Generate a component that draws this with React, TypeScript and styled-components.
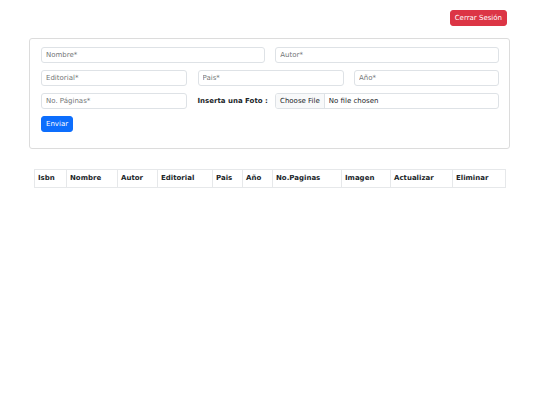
import styled, { createGlobalStyle } from 'styled-components';

const GlobalStyle = createGlobalStyle`
  * { box-sizing: border-box; }
  body {
    margin: 0;
    background: #fff;
    font-family: "DejaVu Sans", "Liberation Sans", sans-serif;
    color: #212529;
  }
`;

const columns = [
  { label: 'Isbn', width: 32 },
  { label: 'Nombre', width: 51 },
  { label: 'Autor', width: 40 },
  { label: 'Editorial', width: 55 },
  { label: 'Pais', width: 30 },
  { label: 'Año', width: 30 },
  { label: 'No.Paginas', width: 69 },
  { label: 'Imagen', width: 49 },
  { label: 'Actualizar', width: 62 },
  { label: 'Eliminar', width: 53 },
];

export default function App() {
  return (
    <>
      <GlobalStyle />
      <Page>
        <TopBar>
          <Button $variant="danger">Cerrar Sesión</Button>
        </TopBar>

        <Card>
          <Form onSubmit={e => e.preventDefault()}>
            <Row $cols="1fr 1fr">
              <Input placeholder="Nombre*" />
              <Input placeholder="Autor*" />
            </Row>
            <Row $cols="146px 146px 1fr">
              <Input placeholder="Editorial*" />
              <Input placeholder="Pais*" />
              <Input placeholder="Año*" />
            </Row>
            <Row $cols="146px 67px 1fr">
              <Input placeholder="No. Páginas*" />
              <Label>Inserta una Foto :</Label>
              <FileInput type="file" />
            </Row>
            <Actions>
              <Button $variant="primary" type="submit">Enviar</Button>
            </Actions>
          </Form>
        </Card>

        <Table>
          <colgroup>
            {columns.map(c => (
              <col key={c.label} style={{ width: c.width }} />
            ))}
          </colgroup>
          <thead>
            <tr>
              {columns.map(c => (
                <Th key={c.label}>{c.label}</Th>
              ))}
            </tr>
          </thead>
          <tbody></tbody>
        </Table>
      </Page>
    </>
  );
}

const Page = styled.div`
  padding: 10px 30px 0 29px;
`;

const TopBar = styled.div`
  display: flex;
  justify-content: flex-end;
  padding-right: 3px;
`;

const Button = styled.button<{ $variant: 'primary' | 'danger' }>`
  display: block;
  font-family: inherit;
  font-size: 7px;
  line-height: 1.5;
  height: 16px;
  padding: 0 4px;
  border: 1px solid ${p => (p.$variant === 'primary' ? '#0d6efd' : '#dc3545')};
  background: ${p => (p.$variant === 'primary' ? '#0d6efd' : '#dc3545')};
  color: #fff;
  border-radius: 3px;
  cursor: pointer;
`;

const Card = styled.div`
  margin-top: 12px;
  border: 1px solid #dcdcdc;
  border-radius: 3px;
  padding: 8px 10px 16px 11px;
`;

const Form = styled.form`
  display: flex;
  flex-direction: column;
  gap: 7px;
`;

const Row = styled.div<{ $cols: string }>`
  display: grid;
  grid-template-columns: ${p => p.$cols};
  column-gap: 10.5px;
  align-items: center;
  line-height: 1;
`;

const Actions = styled.div`
  display: flex;
  line-height: 1;
`;

const Input = styled.input`
  display: block;
  font-family: inherit;
  font-size: 7px;
  height: 16px;
  width: 100%;
  padding: 0 4px;
  border: 1px solid #dee2e6;
  border-radius: 3px;
  color: #212529;
  outline: none;

  &::placeholder {
    color: #737678;
  }
`;

const Label = styled.label`
  font-size: 7px;
  font-weight: bold;
  color: #212529;
  white-space: nowrap;
`;

const FileInput = styled.input`
  display: block;
  font-family: inherit;
  font-size: 7px;
  height: 16px;
  width: 100%;
  padding: 0;
  border: 1px solid #dee2e6;
  border-radius: 3px;
  color: #212529;
  overflow: hidden;

  &::file-selector-button {
    font-family: inherit;
    font-size: 7px;
    height: 100%;
    margin: 0 4px 0 0;
    padding: 0 4px;
    border: none;
    border-right: 1px solid #dee2e6;
    background: #f8f9fa;
    color: #212529;
  }
`;

const Table = styled.table`
  margin: 20px 0 0 5px;
  width: 471px;
  table-layout: fixed;
  border-collapse: collapse;
`;

const Th = styled.th`
  text-align: left;
  font-size: 7px;
  font-weight: bold;
  line-height: 1.5;
  height: 18px;
  padding: 0 3px;
  border: 1px solid #e6e8ea;
  white-space: nowrap;
  overflow: hidden;
  color: #212529;
`;
